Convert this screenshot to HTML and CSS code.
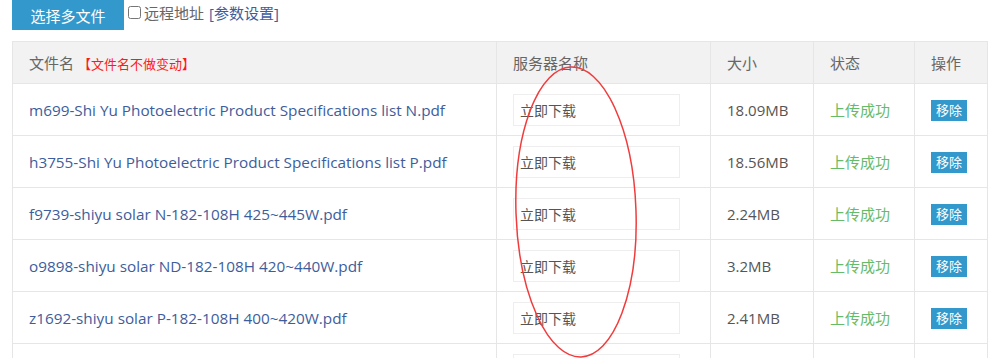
FILE: index.html
```html
<!DOCTYPE html>
<html lang="zh-CN">
<head>
    <meta charset="UTF-8">
    <title>上传文件</title>
    <link rel="stylesheet" href="styles.css">
</head>
<body>
    <div class="toolbar">
        <button class="pick-btn">选择多文件</button>
        <label class="remote"><input type="checkbox"> 远程地址</label>
        <a class="settings" href="#">[参数设置]</a>
    </div>

    <div class="table-wrap">
        <table class="file-table">
            <thead>
                <tr>
                    <th class="col-name">文件名 <span class="note">【文件名不做变动】</span></th>
                    <th class="col-server">服务器名称</th>
                    <th class="col-size">大小</th>
                    <th class="col-state">状态</th>
                    <th class="col-op">操作</th>
                </tr>
            </thead>
            <tbody>
                <tr>
                    <td class="name">m699-Shi Yu Photoelectric Product Specifications list N.pdf</td>
                    <td><input class="server" type="text" value="立即下载"></td>
                    <td class="size">18.09MB</td>
                    <td class="state">上传成功</td>
                    <td><span class="remove">移除</span></td>
                </tr>
                <tr>
                    <td class="name">h3755-Shi Yu Photoelectric Product Specifications list P.pdf</td>
                    <td><input class="server" type="text" value="立即下载"></td>
                    <td class="size">18.56MB</td>
                    <td class="state">上传成功</td>
                    <td><span class="remove">移除</span></td>
                </tr>
                <tr>
                    <td class="name">f9739-shiyu solar N-182-108H 425~445W.pdf</td>
                    <td><input class="server" type="text" value="立即下载"></td>
                    <td class="size">2.24MB</td>
                    <td class="state">上传成功</td>
                    <td><span class="remove">移除</span></td>
                </tr>
                <tr>
                    <td class="name">o9898-shiyu solar ND-182-108H 420~440W.pdf</td>
                    <td><input class="server" type="text" value="立即下载"></td>
                    <td class="size">3.2MB</td>
                    <td class="state">上传成功</td>
                    <td><span class="remove">移除</span></td>
                </tr>
                <tr>
                    <td class="name">z1692-shiyu solar P-182-108H 400~420W.pdf</td>
                    <td><input class="server" type="text" value="立即下载"></td>
                    <td class="size">2.41MB</td>
                    <td class="state">上传成功</td>
                    <td><span class="remove">移除</span></td>
                </tr>
                <tr>
                    <td class="name">&nbsp;</td>
                    <td><input class="server" type="text" value=""></td>
                    <td class="size"></td>
                    <td class="state"></td>
                    <td></td>
                </tr>
            </tbody>
        </table>

        <!-- hand-drawn mark over the server column -->
        <svg class="mark" width="140" height="300" viewBox="0 0 140 300">
            <ellipse cx="70" cy="147" rx="60" ry="145" fill="none" stroke="#f03c3c" stroke-width="1.5" transform="rotate(-2 70 147)"/>
        </svg>
    </div>
</body>
</html>
```

FILE: styles.css
```css
html, body {
    overflow: hidden;
}
body {
    margin: 0;
    padding: 0 12px;
    font-family: "Open Sans", "Noto Sans CJK SC", sans-serif;
    background-color: #fff;
    height: 358px;
}
.toolbar {
    display: flex;
    align-items: flex-start;
    height: 30px;
}
.pick-btn {
    width: 112px;
    height: 30px;
    background-color: #3399cc;
    color: #fff;
    border: none;
    font-family: inherit;
    font-size: 15px;
    padding: 0;
    cursor: pointer;
}
.remote {
    display: flex;
    align-items: center;
    margin-left: 4px;
    margin-top: 2px;
    font-size: 15px;
    color: #666;
}
.remote input {
    width: 13px;
    height: 13px;
    margin: 0 3px 0 0;
}
.settings {
    margin-left: 5px;
    margin-top: 2px;
    font-size: 15px;
    color: #3d5d9c;
    text-decoration: none;
    line-height: 23px;
}
.table-wrap {
    position: relative;
    margin-top: 11px;
    width: 976px;
    height: 317px;
    overflow: hidden;
}
.file-table {
    width: 976px;
    border-collapse: collapse;
    table-layout: fixed;
}
.file-table th,
.file-table td {
    border: 1px solid #e6e6e6;
    text-align: left;
    padding: 0 0 0 16px;
}
.file-table th {
    height: 41px;
    background-color: #f2f2f2;
    font-weight: normal;
    font-size: 15px;
    color: #666;
}
.file-table td {
    height: 51px;
    font-size: 15px;
    color: #555;
}
.col-name { width: 467px; }
.col-server { width: 197px; }
.col-size { width: 86px; }
.col-state { width: 84px; }
.note {
    color: #ff1a1a;
    font-size: 13px;
}
.file-table td.name {
    color: #3d5d9c;
    font-size: 15.3px;
}
.server {
    width: 167px;
    height: 32px;
    box-sizing: border-box;
    border: 1px solid #eee;
    padding: 0 6px;
    font-family: inherit;
    font-size: 14px;
    color: #555;
    outline: none;
}
.file-table td.state {
    color: #66bb6a;
}
.remove {
    display: inline-block;
    background-color: #3399cc;
    color: #fff;
    font-size: 13px;
    padding: 0 5px;
    line-height: 21px;
}
.mark {
    position: absolute;
    left: 494px;
    top: 24px;
}
```
